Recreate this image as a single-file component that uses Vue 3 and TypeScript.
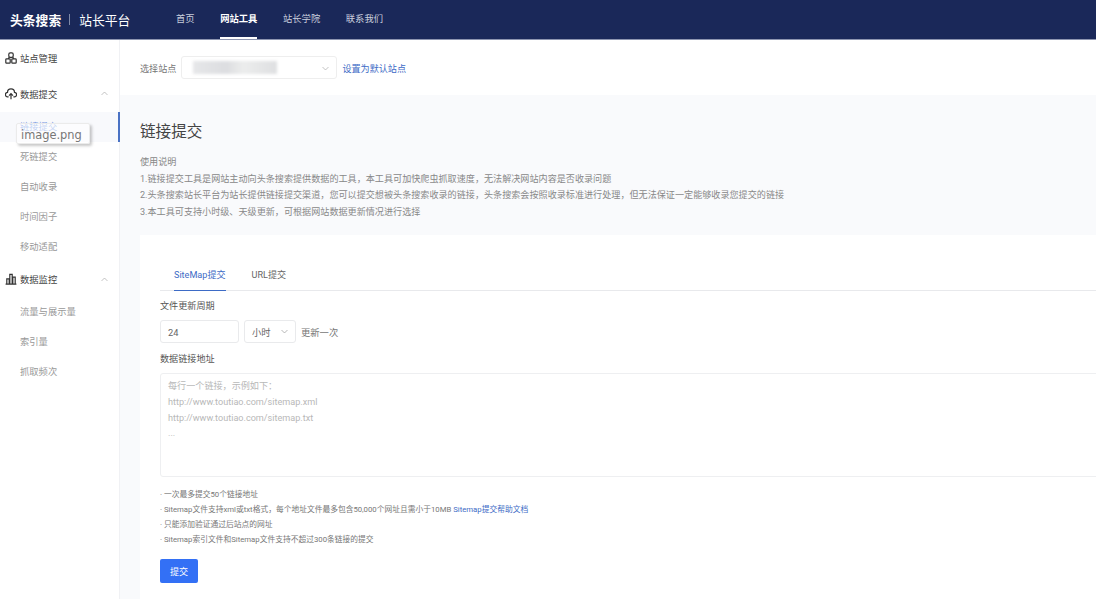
<script setup lang="ts">
const navItems = [
  { label: '首页', active: false },
  { label: '网站工具', active: true },
  { label: '站长学院', active: false },
  { label: '联系我们', active: false },
]
const notes = [
  '· 只能添加验证通过后站点的网址',
  '· Sitemap索引文件和Sitemap文件支持不超过300条链接的提交',
]
const usage = [
  '使用说明',
  '1.链接提交工具是网站主动向头条搜索提供数据的工具，本工具可加快爬虫抓取速度，无法解决网站内容是否收录问题',
  '2.头条搜索站长平台为站长提供链接提交渠道，您可以提交想被头条搜索收录的链接，头条搜索会按照收录标准进行处理，但无法保证一定能够收录您提交的链接',
  '3.本工具可支持小时级、天级更新，可根据网站数据更新情况进行选择',
]
const submitItems = ['链接提交', '死链提交', '自动收录', '时间因子', '移动适配']
const monitorItems = ['流量与展示量', '索引量', '抓取频次']
const placeholder = ['每行一个链接，示例如下：', 'http://www.toutiao.com/sitemap.xml', 'http://www.toutiao.com/sitemap.txt', '...']
</script>

<template>
  <div class="page">
    <header class="topbar">
      <div class="logo">
        <span class="logo-main">头条搜索</span>
        <i class="logo-sep"></i>
        <span class="logo-sub">站长平台</span>
      </div>
      <nav class="nav">
        <a v-for="n in navItems" :key="n.label" class="nav-item" :class="{ active: n.active }">{{ n.label }}</a>
      </nav>
    </header>

    <div class="body">
      <aside class="side">
        <div class="group">
          <svg class="gicon" viewBox="0 0 12 12" fill="none" stroke="#333" stroke-width="1.2">
            <rect x="3.8" y=".8" width="4.4" height="4.6" rx="1.4" />
            <rect x=".8" y="6.8" width="4.4" height="4.4" rx=".8" />
            <rect x="6.8" y="6.8" width="4.4" height="4.4" rx=".8" />
            <path d="M4.4 5 3.2 6.8M7.6 5l1.2 1.8" />
          </svg>
          <span>站点管理</span>
        </div>
        <div class="group">
          <svg class="gicon" viewBox="0 0 12 12" fill="none" stroke="#333" stroke-width="1.2">
            <path d="M3.6 8.8H2.8A2.2 2.2 0 0 1 2.5 4.4 3.5 3.5 0 0 1 9.5 4.4 2.2 2.2 0 0 1 9.2 8.8h-.8" />
            <path d="M6 11.2V5.8M4 7.6l2-2 2 2" />
          </svg>
          <span>数据提交</span>
          <svg class="caret" viewBox="0 0 8 5" fill="none" stroke="#aaa" stroke-width=".8"><path d="M.6 4.2 4 .8l3.4 3.4" /></svg>
        </div>
        <a v-for="(s, i) in submitItems" :key="s" class="sub" :class="{ current: i === 0 }">
          {{ s }}
          <span v-if="i === 0" class="drag">image.png</span>
        </a>
        <div class="group third">
          <svg class="gicon" viewBox="0 0 12 12" fill="none" stroke="#333" stroke-width="1.2">
            <path d="M.6 11.2h10.8M1.8 11.2V5.8h2.4v5.4M4.8 11.2V1.4h2.4v9.8M7.8 11.2V4.2h2.4v7" />
          </svg>
          <span>数据监控</span>
          <svg class="caret" viewBox="0 0 8 5" fill="none" stroke="#aaa" stroke-width=".8"><path d="M.6 4.2 4 .8l3.4 3.4" /></svg>
        </div>
        <a v-for="s in monitorItems" :key="s" class="sub">{{ s }}</a>
      </aside>

      <main class="main">
        <div class="site-row">
          <span class="site-label">选择站点</span>
          <div class="site-select">
            <span class="blur"></span>
            <svg class="chev" viewBox="0 0 8 5" fill="none" stroke="#aaa" stroke-width=".8"><path d="M.6.8 4 4.2 7.4.8" /></svg>
          </div>
          <a class="link">设置为默认站点</a>
        </div>

        <section class="content">
          <h1 class="title">链接提交</h1>
          <div class="usage">
            <p v-for="u in usage" :key="u">{{ u }}</p>
          </div>

          <div class="card">
            <div class="tabs">
              <span class="tab on">SiteMap提交</span>
              <span class="tab">URL提交</span>
            </div>
            <div class="label l1">文件更新周期</div>
            <div class="period">
              <div class="field num">24</div>
              <div class="field unit">
                小时
                <svg class="chev small" viewBox="0 0 8 5" fill="none" stroke="#999" stroke-width=".8"><path d="M.6.8 4 4.2 7.4.8" /></svg>
              </div>
              <span class="once">更新一次</span>
            </div>
            <div class="label l2">数据链接地址</div>
            <div class="area">
              <p v-for="p in placeholder" :key="p">{{ p }}</p>
            </div>
            <div class="notes">
              <p>· 一次最多提交50个链接地址</p>
              <p>· Sitemap文件支持xml或txt格式，每个地址文件最多包含50,000个网址且需小于10MB <a class="link">Sitemap提交帮助文档</a></p>
              <p v-for="n in notes" :key="n">{{ n }}</p>
            </div>
            <button class="submit">提交</button>
          </div>
        </section>
      </main>
    </div>
  </div>
</template>

<style>
html, body { margin: 0; overflow: hidden; background: #fff; }
</style>

<style scoped>
.page {
  width: 1096px;
  height: 599px;
  overflow: hidden;
  font-family: Roboto, "Noto Sans CJK SC", "Liberation Sans", sans-serif;
  font-size: 9.1px;
  color: #666;
  display: flex;
  flex-direction: column;
}
p { margin: 0; }
.topbar {
  height: 40px;
  flex: none;
  background: #1a2859;
  display: flex;
  align-items: stretch;
  border-bottom: 1px solid #8d95b0;
  box-sizing: border-box;
}
.logo {
  width: 176px;
  padding-left: 10px;
  box-sizing: border-box;
  display: flex;
  align-items: center;
  color: #fff;
  font-size: 12.8px;
}
.logo-main { font-weight: 700; }
.logo-sep { width: 1px; height: 11px; background: #7f89a8; margin: 0 9px 0 8px; }
.nav { display: flex; gap: 25.6px; font-size: 9.3px; }
.nav-item {
  color: #c9cedd;
  line-height: 37px;
  height: 39px;
  box-sizing: border-box;
}
.nav-item.active {
  color: #fff;
  font-weight: 700;
  border-bottom: 2px solid #fff;
}
.body { flex: 1; display: flex; min-height: 0; }
.side {
  width: 120px;
  flex: none;
  box-sizing: border-box;
  border-right: 1px solid #f0f1f4;
  background: #fff;
  font-size: 9.3px;
}
.group {
  height: 36px;
  display: flex;
  align-items: center;
  padding-left: 5px;
  color: #444;
  position: relative;
  box-sizing: border-box;
}
.group.third { height: 35px; padding-bottom: 1px; }
.gicon { width: 12px; height: 12px; margin-right: 3px; flex: none; }
.caret { position: absolute; left: 101px; top: 15px; width: 7px; height: 5px; }
.sub {
  display: block;
  height: 30px;
  line-height: 30px;
  padding-left: 20px;
  color: #999;
  position: relative;
}
.sub.current {
  color: #7f9fe6;
  background: #f8f9fc;
  border-right: 2px solid #4a72c4;
  margin-right: -1px;
}
.drag {
  position: absolute;
  left: 16px;
  top: 11px;
  width: 74px;
  height: 21px;
  box-sizing: border-box;
  padding-left: 4px;
  font-family: "DejaVu Sans", sans-serif;
  font-size: 11.4px;
  line-height: 22px;
  color: #777;
  background: rgba(255, 255, 255, .55);
  border: 1px solid #ebebeb;
  border-radius: 2px;
  box-shadow: 2px 2px 3px rgba(0, 0, 0, .22);
}
.main { flex: 1; min-width: 0; display: flex; flex-direction: column; overflow: hidden; }
.site-row {
  height: 55px;
  flex: none;
  display: flex;
  align-items: center;
  padding-left: 20px;
  background: #fff;
}
.site-label { color: #777; margin-right: 5px; }
.site-select {
  width: 156px;
  height: 23px;
  box-sizing: border-box;
  border: 1px solid #eee;
  border-radius: 3px;
  position: relative;
  margin-right: 5px;
}
.blur {
  position: absolute;
  left: 11px;
  top: 4px;
  width: 84px;
  height: 13px;
  background: linear-gradient(90deg, #e6e7e9, #dcdde0 40%, #eceded 60%, #dedfe1);
  filter: blur(1.5px);
}
.chev { position: absolute; right: 7px; top: 9px; width: 7px; height: 5px; }
.link { color: #3d6bc6; }
.content {
  flex: 1;
  background: #f9fafc;
  padding: 26px 0 0 20px;
  min-height: 0;
}
.title {
  margin: 0;
  font-size: 15.6px;
  line-height: 22px;
  font-weight: 400;
  color: #444;
}
.usage {
  margin-top: 11px;
  line-height: 16.6px;
  color: #888;
}
.card {
  margin-top: 15px;
  background: #fff;
  padding: 29px 0 0 20px;
  height: 400px;
  width: 1000px;
}
.tabs {
  display: flex;
  gap: 26px;
  padding-left: 14px;
  height: 26px;
  border-bottom: 1px solid #e8e9ec;
}
.tab { line-height: 22px; color: #666; height: 26px; }
.tab.on { color: #3d6bc6; border-bottom: 1px solid #3d6bc6; }
.label { color: #555; line-height: 16px; }
.l1 { margin-top: 7px; }
.l2 { margin-top: 8px; }
.period {
  display: flex;
  align-items: center;
  margin-top: 6px;
  height: 23px;
  font-size: 9.3px;
}
.field {
  height: 23px;
  box-sizing: border-box;
  border: 1px solid #e9eaec;
  border-radius: 3px;
  line-height: 23px;
  padding-left: 7px;
  color: #666;
  position: relative;
}
.num { width: 79px; margin-right: 5px; }
.unit { width: 52px; margin-right: 5px; }
.chev.small { top: 8px; right: 7px; }
.once { color: #777; }
.area {
  margin-top: 6px;
  height: 104px;
  box-sizing: border-box;
  border: 1px solid #eeeff1;
  border-radius: 3px;
  padding: 5px 7px 0;
  color: #b8b8b8;
  line-height: 15.6px;
}
.notes {
  margin-top: 10px;
  font-size: 7.75px;
  line-height: 15px;
  color: #777;
}
.submit {
  display: block;
  margin-top: 12px;
  width: 38px;
  height: 24px;
  border: 0;
  border-radius: 2px;
  background: #3370f5;
  color: #fff;
  font: inherit;
  padding: 0;
}
</style>
